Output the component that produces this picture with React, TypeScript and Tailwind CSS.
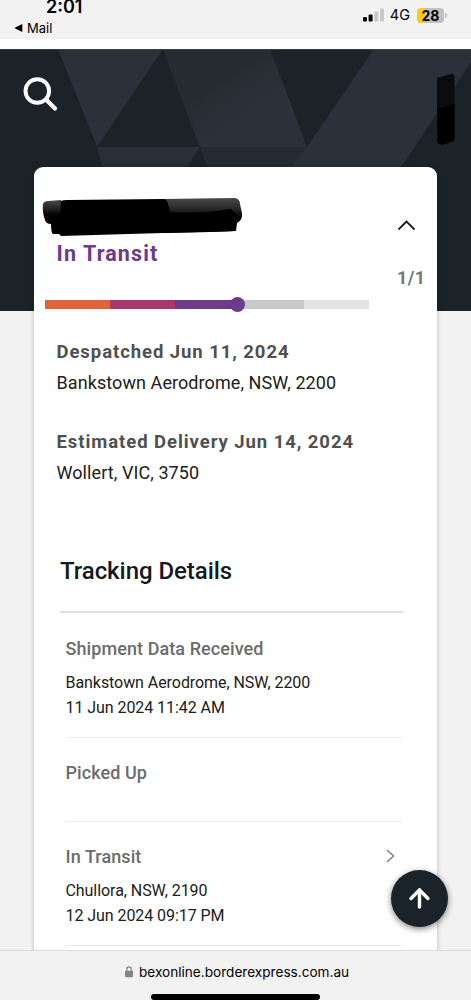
import { ChevronRight, ArrowUp } from 'lucide-react';

const segments = [
  { name: 'received', className: 'w-[65px] bg-[#e0633a]' },
  { name: 'picked-up', className: 'w-[65px] bg-[#a63a6b]' },
  { name: 'in-transit', className: 'w-[63px] bg-[#6d3a8c]' },
  { name: 'out-for-delivery', className: 'w-[66px] bg-[#c9c9c9]' },
  { name: 'delivered', className: 'w-[65px] bg-[#e3e3e3]' },
];

const events = [
  { title: 'Shipment Data Received', location: 'Bankstown Aerodrome, NSW, 2200', time: '11 Jun 2024 11:42 AM' },
  { title: 'Picked Up' },
  { title: 'In Transit', location: 'Chullora, NSW, 2190', time: '12 Jun 2024 09:17 PM', hasMore: true },
];

function StatusBar() {
  return (
    <div className="flex h-[39px] shrink-0 justify-between bg-[#f2f2f2] font-['Inter',sans-serif] text-black">
      <div className="pl-[14px]">
        <div className="pl-[32px] text-[18px] leading-[14px] font-semibold">2:01</div>
        <div className="mt-[6px] flex items-center text-[13px] leading-[16px]">
          <svg width="9" height="8" viewBox="0 0 9 8" className="mr-1">
            <path d="M0.3 4 L8.3 0 V8 Z" fill="#000" />
          </svg>
          Mail
        </div>
      </div>
      <div className="flex h-[30px] items-center pr-[24px]">
        <svg width="21" height="14" viewBox="0 0 21 14">
          <rect x="0" y="9" width="4" height="4.5" rx="1.2" fill="#000" />
          <rect x="5.6" y="6.5" width="4" height="7" rx="1.2" fill="#000" />
          <rect x="11.3" y="3.5" width="4" height="10" rx="1.2" fill="#c8c8c8" />
          <rect x="17" y="0.5" width="4" height="13" rx="1.2" fill="#c8c8c8" />
        </svg>
        <span className="ml-[6px] text-[14.5px] leading-[20px]">4G</span>
        <span className="ml-[7px] h-[15px] w-[27px] rounded-[4px] bg-linear-to-r from-[#fbcd10] from-30% to-[#c0c0c0] to-30% text-center text-[14px] leading-[15px] font-bold">
          28
        </span>
        <span className="ml-px h-[5px] w-[2px] rounded-r-full bg-[#c0c0c0]" />
      </div>
    </div>
  );
}

function Hero() {
  return (
    <svg className="absolute inset-x-0 top-0" width="471" height="262" viewBox="0 0 471 262">
      <defs>
        <linearGradient id="facet" x1="0" y1="0" x2="1" y2="1">
          <stop offset="0.35" stopColor="#252c31" />
          <stop offset="0.65" stopColor="#2a313a" />
        </linearGradient>
      </defs>
      <rect width="471" height="262" fill="#1b2329" />
      <path d="M58 0 H163 L97 98 Z" fill="#2a313a" />
      <path d="M97 98 H200 L186 120 H103 Z" fill="#282f38" />
      <path d="M163 0 H270 L307 98 H200 Z" fill="url(#facet)" />
      <path d="M200 98 H307 L296 120 H208 Z" fill="#242b32" />
      <path d="M374 0 H471 V13 L400 120 H290 L307 98 Z" fill="#2a313a" />
      <rect width="471" height="1" fill="#3a4046" />
      <path d="M437 31 Q437 28 440 28 L451 25 Q454.500 24 454.500 28 V90 Q454 92 451 93 L443 95.500 Q437 96 437 91 Z" fill="#0a0d0e" />
      <path d="M437.500 60 L454.500 55 V90 Q454 92 451 93 L443 95.500 Q437 96 437 91 Z" fill="#000" />
      <circle cx="37.300" cy="42" r="11.800" fill="none" stroke="#fff" strokeWidth="3.900" />
      <path d="M46 50.500 L55 59.500" stroke="#fff" strokeWidth="4.200" strokeLinecap="round" />
    </svg>
  );
}

// Marker strokes hiding the consignment number
function Redaction() {
  return (
    <svg width="204" height="42" viewBox="0 0 204 42" className="ml-[7px]">
      <defs>
        <linearGradient id="marker" x1="0" y1="0" x2="0" y2="1">
          <stop offset="0" stopColor="#4a4a4a" />
          <stop offset="0.35" stopColor="#222" />
          <stop offset="0.6" stopColor="#000" />
        </linearGradient>
      </defs>
      <path d="M2 9 Q3 6 7 6 L20 5 L22 30 L10 29 Q5 29 4 25 Q1 16 2 9 Z" fill="url(#marker)" />
      <path d="M120 4 L194 3 Q199 4 199 9 L201 18 Q202 25 196 28 L195 36 L120 38 Z" fill="url(#marker)" />
      <path d="M20 6 Q22 5 26 5 L122 4 Q126 4 127 9 L129 17 Q160 19 190 14 L196 20 L194 36 Q180 37 122 38 L20 41 L18 39 L12 39 Q10 38 10 28 L19 26 Z" fill="#000" />
    </svg>
  );
}

function TrackingEvent({ event }: { event: (typeof events)[number] }) {
  return (
    <div className={`border-b border-[#ececec] pt-5 ${event.location ? 'h-[124px]' : 'h-[84px]'}`}>
      <div className="flex h-[30px] items-center justify-between">
        <h3 className="text-[18px] leading-[30px] font-medium tracking-[0.08px] text-[#6c6c6c]">{event.title}</h3>
        {event.hasMore && (
          <svg width="9" height="14" viewBox="0 0 9 14" className="mr-[7px] -mt-[2px]">
            <path d="M1 1 L7.500 7 L1 13" fill="none" stroke="#858585" strokeWidth="1.600" />
          </svg>
        )}
      </div>
      {event.location && (
        <div className="mt-[6px] text-[16px] leading-[25px] tracking-[-0.06px] text-[#202020]">
          <p>{event.location}</p>
          <p>{event.time}</p>
        </div>
      )}
    </div>
  );
}

export default function App() {
  return (
    <div className="flex h-[1000px] w-[471px] flex-col overflow-hidden bg-[#f2f2f2] font-['Roboto',sans-serif]">
      <StatusBar />
      <div className="h-[10px] shrink-0 bg-white" />

      <main className="relative h-[901px] shrink-0 overflow-hidden">
        <Hero />
        <div className="relative mt-[118px] ml-[34px] h-[900px] w-[403px] rounded-t-[9px] bg-white pt-[28px] shadow-[0_0_4px_rgba(0,0,0,0.25)]">
          <div className="flex h-[105px] justify-between">
            <div>
              <Redaction />
              <h1 className="mt-px pl-[22.5px] text-[21.5px] leading-[32px] font-bold tracking-[1.1px] text-[#6d3a8c]">In Transit</h1>
            </div>
            <div className="w-[40px] pt-[25px]">
              <svg width="19" height="11" viewBox="0 0 19 11">
                <path d="M1.500 9.500 L9.500 1.500 L17.500 9.500" fill="none" stroke="#1b1b1b" strokeWidth="1.800" />
              </svg>
              <div className="mt-[35px] text-[18px] leading-[24px] font-bold tracking-[0.4px] text-[#777777]">1/1</div>
            </div>
          </div>

          <div className="relative ml-[11px] flex h-[9px]">
            {segments.map(segment => (
              <div key={segment.name} className={segment.className} />
            ))}
            <div className="absolute -top-[3px] left-[185px] size-[15px] rounded-full bg-[#6d3a8c]" />
          </div>

          <div className="mt-[28px] space-y-[30px] pl-[22.5px]">
            <div>
              <h2 className="text-[18.5px] leading-[30px] font-bold tracking-[0.93px] text-[#505050]">Despatched Jun 11, 2024</h2>
              <p className="pt-px text-[18px] leading-[29px] tracking-[0.08px] text-[#202020]">Bankstown Aerodrome, NSW, 2200</p>
            </div>
            <div>
              <h2 className="text-[18.5px] leading-[30px] font-bold tracking-[0.93px] text-[#505050]">Estimated Delivery Jun 14, 2024</h2>
              <p className="pt-px text-[18px] leading-[29px] tracking-[0.08px] text-[#202020]">Wollert, VIC, 3750</p>
            </div>
          </div>

          <div className="mt-[67px] mr-[34px] ml-[26px]">
            <h2 className="h-[59px] border-b-2 border-[#dedede] pt-px text-[24px] leading-[32px] font-medium tracking-[-0.05px] text-[#16191d]">Tracking Details</h2>
            <div className="mt-px mr-px ml-[5.5px]">
              {events.map(event => (
                <TrackingEvent key={event.title} event={event} />
              ))}
            </div>
          </div>
        </div>

        <button className="absolute top-[821px] left-[391px] flex size-[57px] items-center justify-center rounded-full bg-[#1a232a] text-white shadow-[0_2px_6px_rgba(0,0,0,0.5)]">
          <ArrowUp size={29} strokeWidth={2.8} className="-mt-px" />
        </button>
      </main>

      <footer className="relative h-[50px] shrink-0 border-t border-[#dcdcdc] bg-[#f2f2f2] font-['Inter',sans-serif]">
        <div className="flex h-[42px] items-center pl-[125px] text-[13.6px] text-black">
          <svg width="8" height="12" viewBox="0 0 8 12" className="mr-[6px]">
            <path d="M1.800 5 V3 A2.200 2.200 0 0 1 6.200 3 V5" fill="none" stroke="#858585" strokeWidth="1.300" />
            <rect x="0" y="4.700" width="8" height="6.600" rx="1.200" fill="#858585" />
          </svg>
          bexonline.borderexpress.com.au
        </div>
        <div className="mt-px ml-[151px] h-[6px] w-[169px] rounded-full bg-black" />
      </footer>
    </div>
  );
}
